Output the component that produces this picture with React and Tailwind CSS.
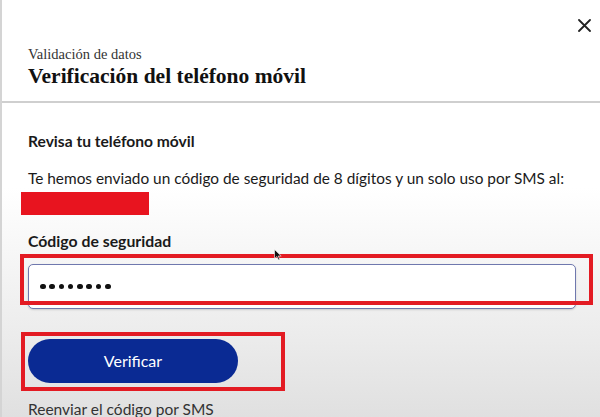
export default function App() {
  return (
    <div
      className="relative w-[600px] h-[417px] overflow-hidden border-l-2 border-[#d4d4d4] bg-[linear-gradient(180deg,#ffffff_0%,#ffffff_45%,#ececec_80%,#e0e0e0_100%)]"
      style={{ fontFamily: "Lato, 'Liberation Sans', sans-serif" }}
    >
      {/* header */}
      <div className="relative bg-white border-b-2 border-[#cfcfcf] h-[103px] px-[26px] pt-[45px]">
        <button className="absolute top-[17px] right-[8px] w-[16px] h-[16px] flex items-center justify-center text-[#222]">
          <svg width="13" height="13" viewBox="0 0 13 13" fill="none" stroke="currentColor" strokeWidth="1.8" strokeLinecap="round">
            <path d="M1 1L12 12M12 1L1 12" />
          </svg>
        </button>
        <div
          className="text-[14.5px] leading-[18px] text-[#333]"
          style={{ fontFamily: "'Liberation Serif', serif" }}
        >
          Validación de datos
        </div>
        <div
          className="text-[21.5px] leading-[26px] font-bold text-[#111]"
          style={{ fontFamily: "'Liberation Serif', serif" }}
        >
          Verificación del teléfono móvil
        </div>
      </div>

      {/* body */}
      <div className="px-[26px] pt-[28px]">
        <div className="text-[15.6px] leading-[20px] font-bold text-[#1a1a1a]">Revisa tu teléfono móvil</div>
        <div className="mt-[17px] text-[15.4px] leading-[20px] text-[#1a1a1a] whitespace-nowrap">
          Te hemos enviado un código de seguridad de 8 dígitos y un solo uso por SMS al:
        </div>
        <div className="mt-[4px] -ml-[7px] w-[128px] h-[23px] bg-[#e8141f]" />
        <div className="mt-[16px] text-[15.8px] leading-[20px] font-bold text-[#1a1a1a]">Código de seguridad</div>

        <div className="relative mt-[13px] w-[548px]">
          <div className="h-[45px] rounded-[5px] border-[1.5px] border-[#6f78ae] bg-white shadow-[0_1px_2px_rgba(0,0,0,0.15)] flex items-center pl-[11px] gap-[3.8px]">
            {[0, 1, 2, 3, 4, 5, 6, 7].map((i) => (
              <span key={i} className="w-[5.5px] h-[5.5px] rounded-full bg-[#111]" />
            ))}
          </div>
          <div className="pointer-events-none absolute -left-[8px] -top-[10px] w-[573px] h-[51px] border-[4px] border-[#e31b23]" />
        </div>

        <div className="relative mt-[30px] w-[210px]">
          <button className="w-[210px] h-[44px] rounded-full bg-[#0a2a93] text-white text-[16px]">Verificar</button>
          <div className="pointer-events-none absolute -left-[7px] -top-[7px] w-[264px] h-[59px] border-[4px] border-[#e31b23]" />
        </div>

        <div className="mt-[16px] text-[15.5px] leading-[20px] text-[#333]">Reenviar el código por SMS</div>
      </div>

      {/* mouse cursor */}
      <svg className="absolute left-[272px] top-[249px]" width="8" height="12" viewBox="0 0 8 12">
        <path d="M0.5 0.5L0.5 9.5L2.8 7.5L4.5 11L5.8 10.4L4.2 7L7.2 7Z" fill="#111" stroke="#fff" strokeWidth="0.6" />
      </svg>
    </div>
  );
}
